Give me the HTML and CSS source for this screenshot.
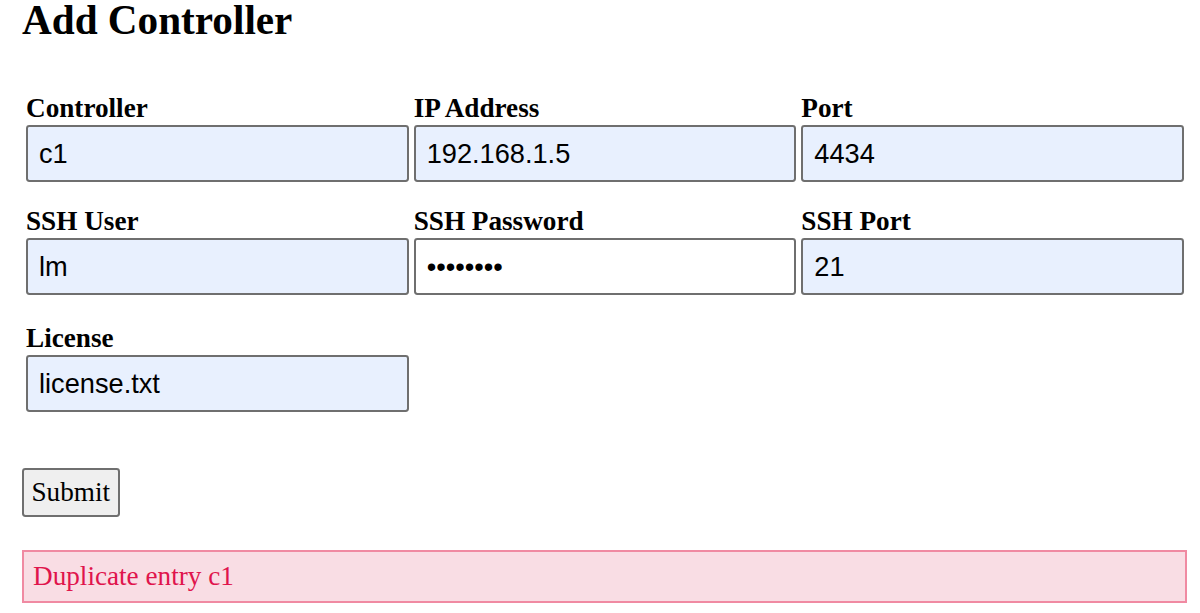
FILE: index.html
```html
<!DOCTYPE html>
<html lang="en">
<head>
<meta charset="utf-8">
<title>Add Controller</title>
<link rel="stylesheet" href="styles.css">
</head>
<body>
<div class="page">
  <h1 class="title">Add Controller</h1>
  <form class="form">
    <div class="grid">
      <div class="field">
        <label class="label" for="controller">Controller</label>
        <input class="input autofill" id="controller" type="text" value="c1">
      </div>
      <div class="field">
        <label class="label" for="ip">IP Address</label>
        <input class="input autofill" id="ip" type="text" value="192.168.1.5">
      </div>
      <div class="field">
        <label class="label" for="port">Port</label>
        <input class="input autofill" id="port" type="text" value="4434">
      </div>
      <div class="field">
        <label class="label" for="sshuser">SSH User</label>
        <input class="input autofill" id="sshuser" type="text" value="lm">
      </div>
      <div class="field">
        <label class="label" for="sshpass">SSH Password</label>
        <input class="input" id="sshpass" type="password" value="12345678">
      </div>
      <div class="field">
        <label class="label" for="sshport">SSH Port</label>
        <input class="input autofill" id="sshport" type="text" value="21">
      </div>
    </div>
    <div class="grid grid-last">
      <div class="field">
        <label class="label" for="license">License</label>
        <input class="input autofill" id="license" type="text" value="license.txt">
      </div>
    </div>
    <div class="actions">
      <button class="submit" type="button">Submit</button>
    </div>
  </form>
  <div class="alert">Duplicate entry c1</div>
</div>
</body>
</html>
```

FILE: styles.css
```css
html, body {
  margin: 0;
  padding: 0;
  background: #ffffff;
}

body {
  font-family: "Liberation Serif", "Times New Roman", serif;
  color: #000000;
}

.page {
  width: 1165px;
  padding-left: 22px;
}

.title {
  margin: 0;
  font-size: 41.2px;
  line-height: 40px;
  font-weight: bold;
}

.form {
  margin: 53px 0 0 0;
}

.grid {
  display: grid;
  grid-template-columns: 1fr 1fr 1fr;
  column-gap: 5px;
  row-gap: 24px;
  margin: 0 3px 0 4px;
}

.grid-last {
  margin-top: 28px;
}

.field {
  display: flex;
  flex-direction: column;
  gap: 2px;
}

.label {
  display: block;
  font-size: 27.2px;
  line-height: 30px;
  font-weight: bold;
}

.input {
  box-sizing: border-box;
  width: 100%;
  height: 57px;
  margin: 0;
  padding: 0 11px;
  border: 2px solid #6f6f6f;
  border-radius: 3.4px;
  background: #ffffff;
  font-family: "Liberation Sans", Arial, sans-serif;
  font-size: 27.2px;
  color: #000000;
  outline: none;
}

.autofill {
  background: #e8f0fe;
}

.actions {
  margin-top: 56px;
}

.submit {
  box-sizing: border-box;
  height: 49px;
  padding: 0 7.5px;
  margin: 0;
  border: 2px solid #6f6f6f;
  border-radius: 3.4px;
  background: #efefef;
  font-family: "Liberation Serif", "Times New Roman", serif;
  font-size: 27.2px;
  color: #000000;
}

.alert {
  box-sizing: border-box;
  margin-top: 33px;
  height: 53px;
  padding: 0 9px;
  display: flex;
  align-items: center;
  background: #f9dde4;
  border: 2px solid #f08aa2;
  color: #e0144c;
  font-size: 27.2px;
}
```
